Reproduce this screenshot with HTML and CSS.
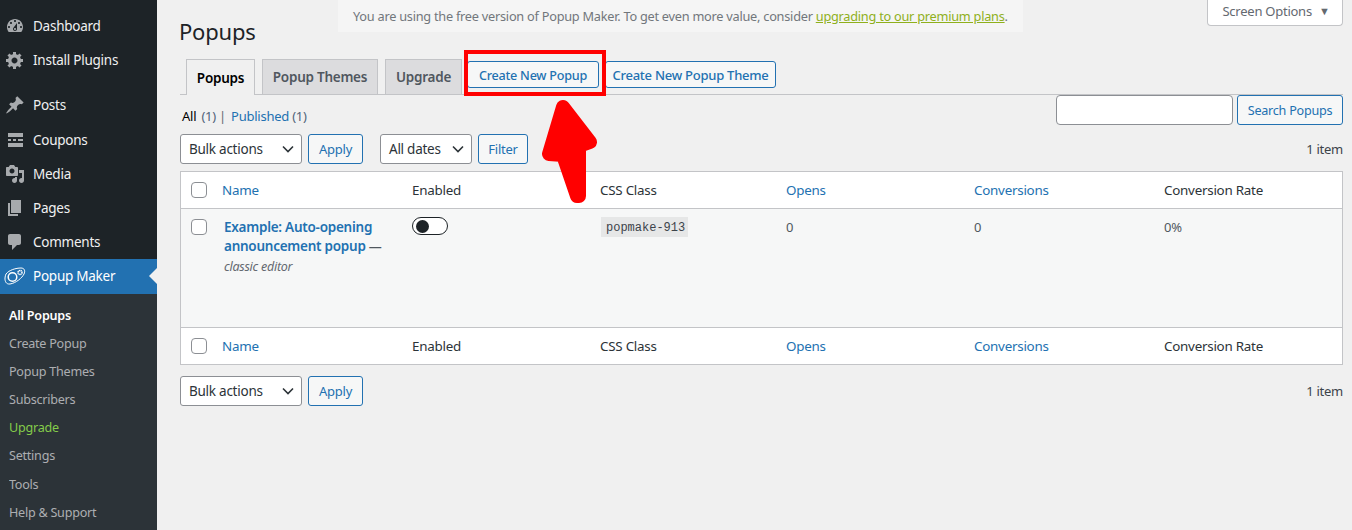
FILE: index.html
```html
<!DOCTYPE html>
<html lang="en">
<head>
<meta charset="utf-8">
<title>Popups</title>
<link rel="stylesheet" href="styles.css">
</head>
<body>
<div class="layout">
  <nav class="sidebar">
    <ul class="menu">
      <li class="menu-item"><svg class="ico" viewBox="0 0 20 20"><path d="M3.76 16h12.48c1.1-1.37 1.76-3.11 1.76-5 0-4.42-3.58-8-8-8s-8 3.58-8 8c0 1.89.66 3.63 1.76 5zM10 4c.55 0 1 .45 1 1s-.45 1-1 1-1-.45-1-1 .45-1 1-1zM6 6c.55 0 1 .45 1 1s-.45 1-1 1-1-.45-1-1 .45-1 1-1zm8 0c.55 0 1 .45 1 1s-.45 1-1 1-1-.45-1-1 .45-1 1-1zm-5.37 5.55L12 7v6c0 1.1-.9 2-2 2s-2-.9-2-2c0-.57.24-1.08.63-1.45zM4 10c.55 0 1 .45 1 1s-.45 1-1 1-1-.45-1-1 .45-1 1-1zm12 0c.55 0 1 .45 1 1s-.45 1-1 1-1-.45-1-1 .45-1 1-1zm-5 3c0-.55-.45-1-1-1s-1 .45-1 1 .45 1 1 1 1-.45 1-1z" fill-rule="evenodd"/></svg>Dashboard</li>
      <li class="menu-item menu-sep"><svg class="ico" viewBox="0 0 20 20"><path d="M18 12h-2.18c-.17.7-.44 1.35-.81 1.93l1.54 1.54-2.1 2.1-1.54-1.54c-.58.36-1.23.63-1.91.79V19H8v-2.18c-.68-.16-1.33-.43-1.91-.79l-1.54 1.54-2.12-2.12 1.54-1.54c-.36-.58-.63-1.23-.79-1.91H1V9.03h2.17c.16-.7.44-1.35.8-1.94L2.43 5.55l2.1-2.1 1.54 1.54c.58-.37 1.24-.64 1.93-.81V2h3v2.18c.68.16 1.33.43 1.91.79l1.54-1.54 2.12 2.12-1.54 1.54c.36.59.64 1.24.8 1.94H18V12zm-8.5 1.5c1.66 0 3-1.34 3-3s-1.34-3-3-3-3 1.34-3 3 1.34 3 3 3z"/></svg>Install Plugins</li>
      <li class="menu-item menu-tall"><svg class="ico" viewBox="0 0 20 20"><path d="M10.44 3.02l1.82-1.82 6.36 6.35-1.83 1.82c-1.05-.68-2.48-.57-3.41.36l-.75.75c-.92.93-1.04 2.35-.35 3.41l-1.83 1.82-2.41-2.41-2.8 2.79c-.42.42-3.38 2.71-3.8 2.29s1.86-3.39 2.28-3.81l2.79-2.79L4.1 9.36l1.83-1.82c1.05.69 2.48.57 3.4-.36l.75-.75c.93-.92 1.05-2.35.36-3.41z"/></svg>Posts</li>
      <li class="menu-item"><svg class="ico" viewBox="0 0 20 20"><path d="M3 3h15v4H3zM3 9h3v2H3zM8 9h3v2H8zM13 9h5v2h-5zM3 13h15v4H3z"/></svg>Coupons</li>
      <li class="menu-item"><svg class="ico" viewBox="0 0 20 20"><path d="M13 11V4c0-.55-.45-1-1-1h-1.67L9 1H5L3.67 3H2c-.55 0-1 .45-1 1v7c0 .55.45 1 1 1h10c.55 0 1-.45 1-1zM7 4.5c1.38 0 2.5 1.12 2.5 2.5S8.38 9.5 7 9.5 4.5 8.38 4.5 7 5.62 4.5 7 4.5zM14 6h5v10.5c0 1.38-1.12 2.5-2.5 2.5S14 17.88 14 16.5s1.12-2.5 2.5-2.5c.17 0 .34.02.5.05V9h-3V6zm-4 8.05V13h2v3.5c0 1.38-1.12 2.5-2.5 2.5S7 17.88 7 16.5 8.12 14 9.5 14c.17 0 .34.02.5.05z"/></svg>Media</li>
      <li class="menu-item"><svg class="ico" viewBox="0 0 20 20"><path d="M6 15V2h10v13H6zm-1 1h8v2H3V5h2v11z"/></svg>Pages</li>
      <li class="menu-item"><svg class="ico" viewBox="0 0 20 20"><path d="M5 2h9c1.100 0 2 .9 2 2v7c0 1.100-.9 2-2 2h-2l-5 5v-5H5c-1.100 0-2-.9-2-2V4c0-1.100.9-2 2-2z"/></svg>Comments</li>
      <li class="menu-item menu-current"><svg class="ico ico-logo" viewBox="0 0 22 20"><path d="M2 8C5 4 12 2 17 2c3.500 0 4.500 3 3 6-2 4-8 9-14 10-4 .5-5.200-3-5-6 .1-1.500.5-3 1-4z" fill="none" stroke="#fff" stroke-width="1"/><circle cx="8.500" cy="11" r="4.300" fill="none" stroke="#fff" stroke-width="1.500"/><circle cx="16" cy="6.500" r="2" fill="none" stroke="#fff" stroke-width="1.500" stroke-dasharray="1.100 .4"/></svg>Popup Maker</li>
    </ul>
    <ul class="submenu">
      <li class="submenu-item submenu-current">All Popups</li>
      <li class="submenu-item">Create Popup</li>
      <li class="submenu-item">Popup Themes</li>
      <li class="submenu-item">Subscribers</li>
      <li class="submenu-item submenu-upgrade">Upgrade</li>
      <li class="submenu-item">Settings</li>
      <li class="submenu-item">Tools</li>
      <li class="submenu-item">Help &amp; Support</li>
    </ul>
  </nav>

  <main class="main">
    <header class="top">
      <h1 class="title">Popups</h1>
      <p class="notice">You are using the free version of Popup Maker. To get even more value, consider <a class="notice-link">upgrading to our premium plans</a>.</p>
      <div class="screen-options">Screen Options<span class="caret">▼</span></div>
    </header>

    <div class="tabs">
      <span class="tab tab-active">Popups</span>
      <span class="tab tab-themes">Popup Themes</span>
      <span class="tab tab-upgrade">Upgrade</span>
      <span class="tab-btn tab-btn-first">Create New Popup</span>
      <span class="tab-btn tab-btn-second">Create New Popup Theme</span>
    </div>

    <div class="filter-row">
      <div class="views"><b class="views-current">All</b> <span class="count">(1)</span> <span class="views-sep">|</span> <a class="link">Published</a> <span class="count">(1)</span></div>
      <div class="search"><span class="search-input"></span><span class="btn btn-search">Search Popups</span></div>
    </div>

    <div class="nav-row">
      <span class="select select-bulk">Bulk actions<svg class="chev" viewBox="0 0 12 8"><path d="M1 1.500l5 5 5-5" fill="none" stroke="#2c3338" stroke-width="1.600"/></svg></span>
      <span class="btn btn-apply">Apply</span>
      <span class="select select-dates">All dates<svg class="chev" viewBox="0 0 12 8"><path d="M1 1.500l5 5 5-5" fill="none" stroke="#2c3338" stroke-width="1.600"/></svg></span>
      <span class="btn btn-filter">Filter</span>
      <span class="items">1 item</span>
    </div>

    <table class="list">
      <thead>
        <tr class="head-row">
          <th class="col-check"><span class="check"></span></th>
          <th class="col-name"><a class="link">Name</a></th>
          <th class="col-enabled">Enabled</th>
          <th class="col-css">CSS Class</th>
          <th class="col-opens"><a class="link">Opens</a></th>
          <th class="col-conv"><a class="link">Conversions</a></th>
          <th>Conversion Rate</th>
        </tr>
      </thead>
      <tbody>
        <tr class="body-row">
          <td class="col-check"><span class="check check-row"></span></td>
          <td class="cell-name"><a class="row-title">Example: Auto-opening announcement popup</a> <span class="dash">—</span><div class="editor">classic editor</div></td>
          <td><span class="toggle"><span class="knob"></span></span></td>
          <td><code class="code">popmake-913</code></td>
          <td class="cell-num">0</td>
          <td class="cell-num">0</td>
          <td class="cell-num">0%</td>
        </tr>
      </tbody>
      <tfoot>
        <tr class="foot-row">
          <th class="col-check"><span class="check"></span></th>
          <th><a class="link">Name</a></th>
          <th>Enabled</th>
          <th>CSS Class</th>
          <th><a class="link">Opens</a></th>
          <th><a class="link">Conversions</a></th>
          <th>Conversion Rate</th>
        </tr>
      </tfoot>
    </table>

    <div class="nav-row nav-bottom">
      <span class="select select-bulk">Bulk actions<svg class="chev" viewBox="0 0 12 8"><path d="M1 1.500l5 5 5-5" fill="none" stroke="#2c3338" stroke-width="1.600"/></svg></span>
      <span class="btn btn-apply">Apply</span>
      <span class="items">1 item</span>
    </div>
  </main>
</div>

<div class="highlight"></div>
<svg class="arrow" viewBox="0 0 70 110"><path d="M24 8L51 43L40 47L40 97L38 97L24 56L10 55Z" fill="#f00" stroke="#f00" stroke-width="14" stroke-linejoin="round"/></svg>
</body>
</html>
```

FILE: styles.css
```css
* { box-sizing: border-box; }
html, body { margin: 0; height: 530px; overflow: hidden; }
body {
  background: #f0f0f0;
  color: #3c434a;
  font-family: "Noto Sans", "Open Sans", sans-serif;
  font-size: 13px;
  letter-spacing: -0.25px;
}
ul { list-style: none; margin: 0; padding: 0; }
p { margin: 0; }
a { color: #2271b1; }

.layout { display: flex; height: 530px; }

/* Sidebar */
.sidebar { flex: 0 0 157px; background: #1d2327; padding-top: 9px; }
.menu-item {
  position: relative;
  display: flex;
  align-items: center;
  gap: 8px;
  height: 34px;
  padding-left: 5px;
  color: #f0f0f1;
  font-size: 13.5px;
}
.menu-sep { margin-bottom: 11px; }
.menu-tall { height: 35px; padding-bottom: 1px; }
.ico { width: 20px; height: 20px; fill: #a7aaad; flex: none; }
.ico-logo { width: 22px; margin-left: -1px; margin-right: -1px; }
.menu-current { background: #2271b1; color: #fff; height: 35px; padding-bottom: 1px; }
.menu-current::after {
  content: "";
  position: absolute;
  right: 0;
  top: 9px;
  border: 8px solid transparent;
  border-right-color: #f0f0f0;
  border-left-width: 0;
}
.submenu { background: #2c3338; padding: 8px 0 0 9px; height: 236px; }
.submenu-item { height: 28.1px; line-height: 28px; color: #c3c4c7; font-size: 12.6px; opacity: .85; }
.submenu-current { color: #fff; font-weight: 600; opacity: 1; }
.submenu-upgrade { color: #84cc4a; opacity: 1; }

/* Main */
.main { flex: 1; min-width: 0; padding: 0 9px 0 23px; }
.top { display: flex; align-items: flex-start; height: 59px; }
.title { flex: 0 0 158px; margin: 17px 0 0 -1px; color: #1d2327; font-size: 22px; font-weight: 400; line-height: 28px; letter-spacing: -0.2px; }
.notice { flex: 0 0 684px; margin-left: 1px; height: 32px; padding: 8px 15px; background: #f5f5f5; color: #72777c; font-size: 12.75px; line-height: 17px; white-space: nowrap; }
.notice-link { color: #8fb01c; text-decoration: underline; }
.screen-options {
  margin-left: auto;
  display: flex;
  align-items: center;
  justify-content: center;
  gap: 7px;
  width: 136px;
  height: 26px;
  padding: 0 0 4px 2px;
  background: #fff;
  border: 1px solid #c3c4c7;
  border-top: 0;
  border-radius: 0 0 4px 4px;
  color: #646970;
}
.caret { font-size: 11px; color: #646970; }

.tabs { display: flex; align-items: flex-start; height: 36px; padding-left: 6px; border-bottom: 1px solid #c3c4c7; }
.tab {
  display: flex;
  align-items: center;
  justify-content: center;
  width: 69px;
  height: 35px;
  margin-right: 7px;
  background: #dcdcde;
  border: 1px solid #c3c4c7;
  border-bottom: 0;
  color: #50575e;
  font-size: 13.5px;
  font-weight: 600;
}
.tab-themes { width: 116px; }
.tab-upgrade { width: 77px; margin-right: 5px; }
.tab-active { height: 36px; background: #f0f0f0; color: #000; }
.tab-btn {
  display: flex;
  align-items: center;
  justify-content: center;
  height: 27px;
  margin-top: 2px;
  padding-top: 1px;
  background: #f6f7f7;
  border: 1px solid #2271b1;
  border-radius: 3px;
  color: #2271b1;
  font-size: 13px;
  font-weight: 500;
}
.tab-btn-first { width: 132px; margin-right: 6px; font-size: 12.6px; }
.tab-btn-second { width: 171px; }

.filter-row { display: flex; justify-content: space-between; height: 39px; }
.views { padding: 13px 0 0 2px; line-height: 17px; }
.views-current { color: #000; font-weight: 400; margin-right: 2px; }
.count { color: #50647a; }
.views-sep { color: #646970; margin: 0 2px 0 0; }
.link { color: #2271b1; }
.search { display: flex; gap: 4px; }
.search-input { width: 177px; height: 30px; background: #fff; border: 1px solid #8c8f94; border-radius: 4px; }
.btn {
  display: flex;
  align-items: center;
  justify-content: center;
  height: 30px;
  background: #f6f7f7;
  border: 1px solid #2271b1;
  border-radius: 3px;
  color: #2271b1;
}
.btn-search { width: 106px; font-size: 12.6px; }
.btn-apply { width: 55px; margin-left: 6px; }
.btn-filter { width: 50px; margin-left: 6px; }

.nav-row { display: flex; align-items: center; height: 30px; margin-bottom: 7px; }
.select {
  display: flex;
  align-items: center;
  justify-content: space-between;
  height: 30px;
  padding: 0 7px 0 8px;
  background: #fff;
  border: 1px solid #8c8f94;
  border-radius: 3px;
  color: #2c3338;
  font-size: 13.5px;
}
.select-bulk { width: 122px; }
.select-dates { width: 92px; margin-left: 17px; }
.chev { width: 12px; height: 8px; }
.items { margin-left: auto; color: #3c434a; }

.list {
  width: 1163px;
  height: 194px;
  table-layout: fixed;
  border-collapse: separate;
  border-spacing: 0;
  background: #fff;
  border: 1px solid #c3c4c7;
}
.list th, .list td { padding: 0 0 0 8px; text-align: left; font-weight: 400; color: #2c3338; font-size: 13.4px; }
.head-row th { height: 37px; border-bottom: 1px solid #c3c4c7; }
.foot-row th { height: 37px; border-top: 1px solid #c3c4c7; padding-bottom: 1px; }
.list .col-check { width: 33px; padding-left: 10px; }
.col-name { width: 190px; }
.col-enabled { width: 188px; }
.col-css { width: 186px; }
.col-opens { width: 188px; }
.col-conv { width: 190px; }
.list .body-row td { height: 118px; background: #f6f7f7; vertical-align: top; padding-top: 9px; color: #50575e; font-size: 13px; }
.list .cell-name { padding-left: 10px; line-height: 19px; padding-right: 20px; }
.row-title { color: #2271b1; font-weight: 600; font-size: 13.5px; }
.dash { color: #50575e; font-weight: 600; }
.editor { font-style: italic; color: #646970; font-size: 12.5px; line-height: 21px; }
.check { display: block; width: 16px; height: 16px; background: #fff; border: 1px solid #8c8f94; border-radius: 4px; }
.check-row { margin-top: 1px; }
.toggle { display: block; position: relative; width: 36px; height: 18px; margin-top: -1px; background: #fff; border: 1px solid #1d2327; border-radius: 9px; }
.knob { position: absolute; left: 3px; top: 1.5px; width: 13px; height: 13px; background: #1d2327; border-radius: 50%; }
.code { display: block; width: 87px; margin: -1px 0 0 1px; padding: 0 5px; height: 20px; background: #e6e7e7; color: #3c434a; font-family: "Liberation Mono", monospace; font-size: 12px; line-height: 23px; letter-spacing: 0; white-space: nowrap; }
.list .cell-num { line-height: 18px; }

.nav-bottom { margin-top: 11px; }

/* Annotation overlay */
.highlight { position: absolute; left: 464px; top: 50px; width: 142px; height: 46px; border: 4px solid #f00; }
.arrow { position: absolute; left: 539px; top: 99px; width: 70px; height: 110px; }
```
